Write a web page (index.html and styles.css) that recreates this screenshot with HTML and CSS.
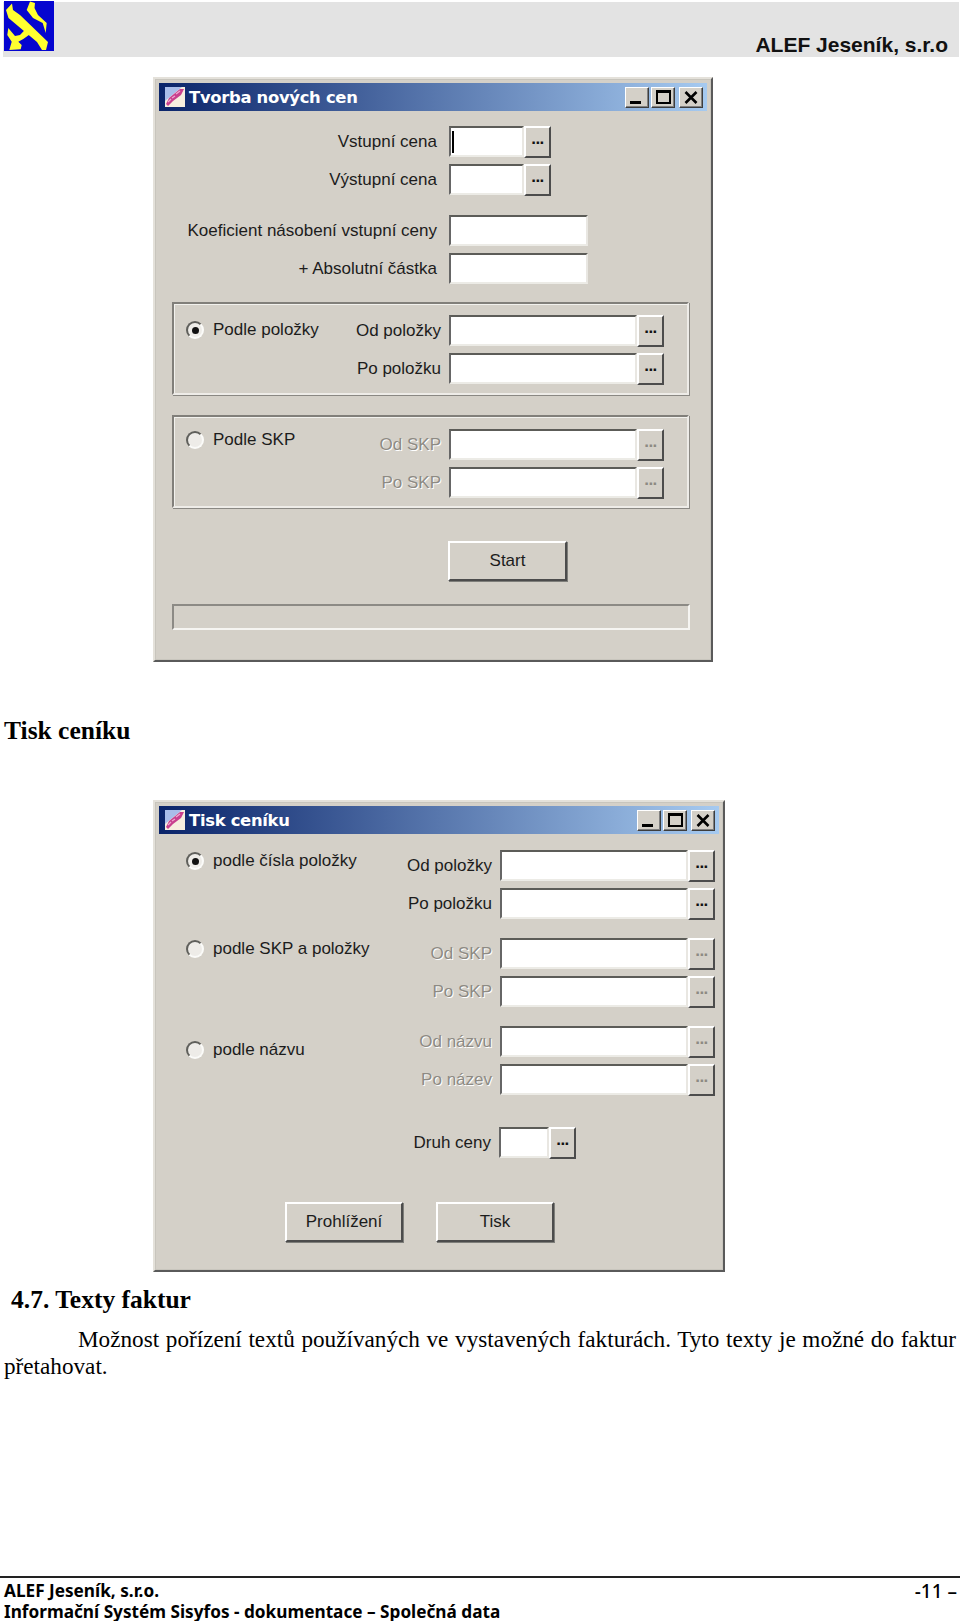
FILE: index.html
```html
<!DOCTYPE html>
<html lang="cs">
<head>
<meta charset="utf-8">
<title>Systém Sisyfos - dokumentace</title>
<link rel="stylesheet" href="styles.css">
</head>
<body>
<svg width="0" height="0" class="defs">
  <defs>
    <symbol id="appicon" viewBox="0 0 20 20">
      <rect width="20" height="20" fill="#f6eedf"/>
      <path d="M0 0H17L0 14Z" fill="#a9bdea"/>
      <path d="M1 17L4 11L15 2L19 2L16 8L8 14L3 19Z" fill="#c8408e"/>
      <path d="M3 15L6 12M7 11L10 9M11 7L15 4" stroke="#efa8cf" stroke-width="1.3" fill="none"/>
    </symbol>
    <symbol id="capx" viewBox="0 0 14 13">
      <path d="M1.5 1L12.5 12M12.5 1L1.5 12" stroke="#000" stroke-width="2.6" fill="none"/>
    </symbol>
  </defs>
</svg>

<header class="top">
  <svg class="logo" viewBox="0 0 50 50" aria-hidden="true">
    <rect width="50" height="50" fill="#0505d0"/>
    <path d="M2 9L8 2.5L9 9L16 14L44 41L42 49L38 49L33 41L4.5 17Z" fill="#ffff30"/>
    <path d="M26 0.5L31 2L30.5 7L34 14L42.7 22L41.7 32L38.7 22L29 17L22.7 9Z" fill="#ffff30"/>
    <path d="M22.7 27L27.7 32L19.3 38L14.3 40.7L17.7 44L16.7 48.3L5.3 49L7.7 40.7L3.3 34L4.3 27L11 35L16 34Z" fill="#ffff30"/>
  </svg>
  <span class="top-name">ALEF Jeseník, s.r.o</span>
</header>

<main>
  <section class="win win-a">
    <div class="titlebar">
      <svg class="appicon"><use href="#appicon"/></svg>
      <span class="title">Tvorba nových cen</span>
      <div class="caps">
        <span class="cap"><i class="g-min"></i></span><span class="cap cap-max"><i class="g-max"></i></span><span class="cap cap-close"><svg class="g-x"><use href="#capx"/></svg></span>
      </div>
    </div>
    <div class="body-a">
      <div class="row r-a1"><label class="lab w-a">Vstupní cena</label><span class="inp w-s"><i class="caret"></i></span><span class="dots">...</span></div>
      <div class="row"><label class="lab w-a">Výstupní cena</label><span class="inp w-s"></span><span class="dots">...</span></div>
      <div class="row r-a3"><label class="lab w-a">Koeficient násobení vstupní ceny</label><span class="inp w-m"></span></div>
      <div class="row"><label class="lab w-a">+ Absolutní částka</label><span class="inp w-m"></span></div>

      <div class="group g1">
        <div class="radio-col"><span class="radio on"></span><span class="rlabel">Podle položky</span></div>
        <div class="fields">
          <div class="row"><label class="lab w-g">Od položky</label><span class="inp w-l"></span><span class="dots">...</span></div>
          <div class="row"><label class="lab w-g">Po položku</label><span class="inp w-l"></span><span class="dots">...</span></div>
        </div>
      </div>
      <div class="group g2">
        <div class="radio-col"><span class="radio"></span><span class="rlabel">Podle SKP</span></div>
        <div class="fields">
          <div class="row"><label class="lab w-g off">Od SKP</label><span class="inp w-l"></span><span class="dots off">...</span></div>
          <div class="row"><label class="lab w-g off">Po SKP</label><span class="inp w-l"></span><span class="dots off">...</span></div>
        </div>
      </div>
      <div class="start-row"><button class="btn" type="button">Start</button></div>
      <div class="progress"></div>
    </div>
  </section>

  <h2 class="h-print">Tisk ceníku</h2>

  <section class="win win-b">
    <div class="titlebar">
      <svg class="appicon"><use href="#appicon"/></svg>
      <span class="title">Tisk ceníku</span>
      <div class="caps">
        <span class="cap"><i class="g-min"></i></span><span class="cap cap-max"><i class="g-max"></i></span><span class="cap cap-close"><svg class="g-x"><use href="#capx"/></svg></span>
      </div>
    </div>
    <div class="body-b">
      <div class="opt">
        <div class="radio-col"><span class="radio on"></span><span class="rlabel">podle čísla položky</span></div>
        <div class="fields">
          <div class="row"><label class="lab w-b">Od položky</label><span class="inp w-l"></span><span class="dots">...</span></div>
          <div class="row"><label class="lab w-b">Po položku</label><span class="inp w-l"></span><span class="dots">...</span></div>
        </div>
      </div>
      <div class="opt">
        <div class="radio-col"><span class="radio"></span><span class="rlabel">podle SKP a položky</span></div>
        <div class="fields">
          <div class="row"><label class="lab w-b off">Od SKP</label><span class="inp w-l"></span><span class="dots off">...</span></div>
          <div class="row"><label class="lab w-b off">Po SKP</label><span class="inp w-l"></span><span class="dots off">...</span></div>
        </div>
      </div>
      <div class="opt">
        <div class="radio-col rc-low"><span class="radio"></span><span class="rlabel">podle názvu</span></div>
        <div class="fields">
          <div class="row"><label class="lab w-b off">Od názvu</label><span class="inp w-l"></span><span class="dots off">...</span></div>
          <div class="row"><label class="lab w-b off">Po název</label><span class="inp w-l"></span><span class="dots off">...</span></div>
        </div>
      </div>
      <div class="row r-price"><label class="lab w-p">Druh ceny</label><span class="inp w-xs"></span><span class="dots">...</span></div>
      <div class="btn-row"><button class="btn btn-n" type="button">Prohlížení</button><button class="btn btn-n" type="button">Tisk</button></div>
    </div>
  </section>

  <h2 class="h-texts">4.7. Texty faktur</h2>
  <p class="para">Možnost pořízení textů používaných ve vystavených fakturách. Tyto texty je možné do faktur přetahovat.</p>
</main>

<footer class="foot">
  <div class="foot-line"><span>ALEF Jeseník, s.r.o.</span><span class="page">-11 –</span></div>
  <div class="foot-line">Informační Systém Sisyfos - dokumentace – Společná data</div>
</footer>
</body>
</html>
```
FILE: styles.css
```css
* { box-sizing: border-box; }
html, body { margin: 0; padding: 0; }
body {
  width: 960px;
  height: 1621px;
  background: #fff;
  color: #000;
  font-family: "Liberation Serif", serif;
  display: flex;
  flex-direction: column;
  overflow: hidden;
}
.defs { display: block; height: 0; }

.top {
  margin: 2px 1px 0 3px;
  height: 55px;
  background: #e3e3e3;
  display: flex;
  justify-content: space-between;
  align-items: flex-end;
  padding-right: 11px;
}
.logo { width: 50px; height: 50px; margin: -1px 0 0 1px; align-self: flex-start; display: block; }
.top-name {
  font: bold 21px/24px "Liberation Sans", sans-serif;
  color: #111;
}

main { flex: 1; }

.win {
  background: #d4d0c8;
  border: 2px solid;
  border-color: #e4e1da #5a5a5a #5a5a5a #e4e1da;
  outline: 1px solid #c8c5bd;
  outline-offset: -3px;
  margin-left: 153px;
  padding: 4px;
  font-family: "Liberation Sans", sans-serif;
  font-size: 17px;
  color: #1c1c1c;
}
.win-a { width: 560px; height: 585px; margin-top: 20px; }
.win-b { width: 572px; height: 472px; margin-top: 55px; }

.titlebar {
  height: 28px;
  display: flex;
  align-items: center;
  padding: 0 4px 0 6px;
  background: linear-gradient(90deg, #0a246a, #a6caf0);
  color: #fff;
}
.appicon { width: 20px; height: 20px; flex: none; }
.title { font: bold 16.4px "DejaVu Sans", sans-serif; letter-spacing: -.3px; margin-left: 4px; }
.caps { margin-left: auto; display: flex; gap: 2px; }
.cap {
  width: 24px; height: 21px;
  background: #d4d0c8;
  border: 1px solid;
  border-color: #fff #3d3d3d #3d3d3d #fff;
  box-shadow: inset -1px -1px 0 #808080;
  display: flex; align-items: center; justify-content: center;
  color: #000;
}
.cap-close { margin-left: 2px; }
.g-min { width: 11px; height: 3px; background: #000; align-self: flex-end; margin: 0 3px 3px 0; }
.g-max { width: 15px; height: 14px; border: 2px solid #000; border-top-width: 3px; }
.g-x { width: 14px; height: 13px; display: block; }

.row { display: flex; align-items: center; height: 31px; }
.lab { text-align: right; flex: none; padding-right: 12px; white-space: nowrap; }
.off { color: #8d8a83; text-shadow: 1px 1px 0 #fff; }

.inp {
  height: 31px;
  flex: none;
  background: #fff;
  border: 2px solid;
  border-color: #5c5c58 #e9e7e2 #ecebe6 #666;
  position: relative;
}
.caret { position: absolute; left: 1px; top: 3px; width: 2px; height: 22px; background: #000; }
.dots {
  width: 27px; height: 32px; flex: none;
  background: #d4d0c8;
  border: 2px solid;
  border-color: #fff #4c4c4c #4c4c4c #fff;
  font: bold 17px/22px "Liberation Sans", sans-serif;
  letter-spacing: -.5px;
  color: #111;
  text-align: center;
}
.dots.off { color: #8d8a83; text-shadow: none; }

.w-s { width: 75px; }
.w-m { width: 139px; }
.w-l { width: 188px; }
.w-xs { width: 50px; }
.w-a { width: 290px; }
.w-g { width: 169px; padding-right: 8px; }
.w-b { width: 169px; padding-right: 8px; }
.w-p { width: 340px; padding-right: 8px; }

.body-a { padding: 15px 0 0 0; }
.body-a > .row { margin-top: 7px; }
.body-a > .r-a1 { margin-top: 0; }
.body-a > .r-a3 { margin-top: 20px; }

.group {
  margin: 18px 0 0 13px;
  width: 517px;
  height: 93px;
  border: 2px solid;
  border-color: #817f7a #eeece8 #eeece8 #817f7a;
  box-shadow: inset 1px 1px 0 #f2f1ed, 1px 1px 0 #8a8883;
  display: flex;
  padding: 11px 0 0 12px;
}
.g2 { margin-top: 20px; padding-top: 12px; }
.radio-col { display: flex; align-items: center; height: 28px; flex: none; }
.group .radio-col { width: 164px; margin-top: 1px; }
.g2 .radio-col { margin-top: -3px; }
.fields { display: flex; flex-direction: column; gap: 7px; }
.group .fields { margin-left: -70px; }
.radio {
  width: 18px; height: 18px; border-radius: 50%;
  background: #eeece8;
  border: 2px solid;
  border-color: #5f5f5b #fbfbf9 #fbfbf9 #5f5f5b;
  flex: none;
  display: flex; align-items: center; justify-content: center;
}
.radio.on::after { content: ""; width: 7px; height: 7px; border-radius: 50%; background: #111; }
.rlabel { margin-left: 9px; white-space: nowrap; }

.start-row { margin: 33px 0 0 289px; }
.btn {
  display: block;
  width: 119px; height: 40px;
  background: #d4d0c8;
  border: 2px solid;
  border-color: #fff #4c4c4c #4c4c4c #fff;
  box-shadow: 1px 1px 0 #7e7e7a;
  font: 17px "Liberation Sans", sans-serif;
  color: #1c1c1c;
  padding: 0;
}
.btn-n { width: 118px; }
.progress {
  margin: 23px 0 0 13px;
  width: 518px;
  height: 26px;
  border: 2px solid;
  border-color: #8c8a85 #f6f5f2 #f6f5f2 #8c8a85;
}

.body-b { padding: 16px 0 0 0; }
.opt { display: flex; padding-left: 27px; margin-bottom: 19px; }
.opt .radio-col { width: 145px; margin-top: -3px; }
.opt .rc-low { margin-top: 10px; }
.r-price { margin: 32px 0 0 0; }
.btn-row { display: flex; gap: 33px; margin: 44px 0 0 126px; }

.h-print {
  font: bold 25.5px/28px "Liberation Serif", serif;
  margin: 55px 0 0 4px;
}
.h-texts {
  font: bold 25.5px/28px "Liberation Serif", serif;
  margin: 14px 0 0 11px;
}
.para {
  margin: 12px 4px 0 4px;
  font-size: 23.2px;
  line-height: 27px;
  text-align: justify;
  text-indent: 74px;
}

.foot {
  border-top: 2px solid #222;
  padding: 3px 3px 0 4px;
  height: 45px;
  font: bold 17.2px/20.5px "Noto Sans", sans-serif;
}
.foot-line { display: flex; justify-content: space-between; white-space: nowrap; }
.page { font-weight: 500; font-size: 19px; }
```
